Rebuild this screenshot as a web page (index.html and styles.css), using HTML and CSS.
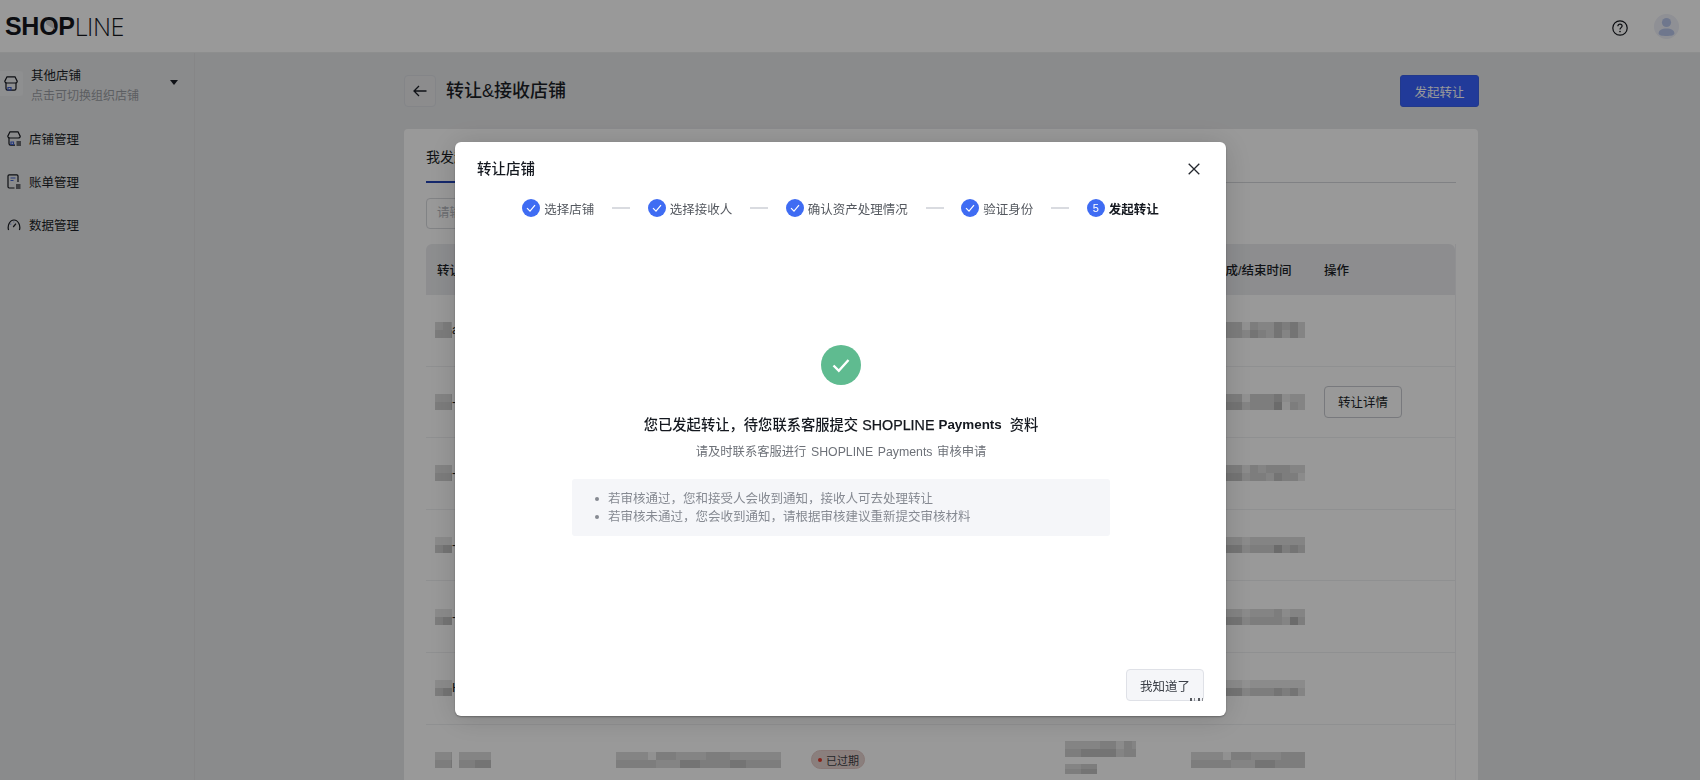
FILE: index.html
```html
<!DOCTYPE html>
<html lang="zh-CN">
<head>
<meta charset="utf-8">
<title>转让&amp;接收店铺</title>
<link rel="stylesheet" href="styles.css">
</head>
<body>
<div class="app">
  <header class="topbar">
    <div class="logo"><b>SH<span class="logo-o">O<svg class="logo-bird" viewBox="0 0 14 14"><path d="M3 3.5C5 1.5 8 1.5 9.5 3.5L12 11.5 6 8C4 7.5 2.5 5.5 3 3.5Z"/></svg></span>P</b><span class="logo-thin">LINE</span></div>
    <div class="top-actions">
      <svg class="help" viewBox="0 0 16 16"><circle cx="8" cy="8" r="7.2"/><path d="M5.9 6.2C5.9 5 6.8 4.2 8 4.2S10.1 5 10.1 6.1C10.1 7.6 8 7.7 8 9.4"/><circle class="dot" cx="8" cy="11.6" r=".8"/></svg>
      <div class="avatar"><svg viewBox="0 0 25 25"><circle cx="12.5" cy="8.5" r="4.6"/><path d="M4.6 19.5C4.6 16 8 14.4 12.5 14.4S20.4 16 20.4 19.5C20.4 21.2 17 22 12.5 22S4.6 21.2 4.6 19.5Z"/></svg></div>
    </div>
  </header>
  <div class="layout">
    <aside class="sidebar">
      <div class="store">
        <div class="store-icon">
          <svg class="ico" viewBox="0 0 14 15"><path d="M3 .8H11L13.2 5.2C13.2 6.6 11.8 7 11 7H3C2.2 7 .8 6.6 .8 5.2Z"/><path d="M2 7V12.6C2 13.6 2.6 14.2 3.6 14.2H10.4C11.4 14.2 12 13.6 12 12.6V7"/><path class="accent" d="M4 11.5H7V14H4Z"/></svg>
        </div>
        <div class="store-text"><div class="store-name">其他店铺</div><div class="store-sub">点击可切换组织店铺</div></div>
        <svg class="caret" viewBox="0 0 8 5"><path d="M0 0H8L4 5Z"/></svg>
      </div>
      <nav class="menu">
        <a class="menu-item"><svg class="ico" viewBox="0 0 14 15"><path d="M3 .8H11L13.2 5.2C13.2 6.6 11.8 7 11 7H3C2.2 7 .8 6.6 .8 5.2Z"/><path d="M2 7V12.6C2 13.6 2.6 14.2 3.6 14.2H8"/><path class="accent" d="M4 11H6.5V13.5H4Z"/><path class="fill" d="M9.5 10H14V15H9.5Z"/></svg>店铺管理</a>
        <a class="menu-item"><svg class="ico" viewBox="0 0 14 15"><path d="M7.5 14H2.2C1.4 14 1 13.6 1 12.8V2C1 1.2 1.4.8 2.2.8H9.8C10.6.8 11 1.2 11 2V8"/><path class="accent" d="M3.5 4H8.5M3.5 6.5H6.5"/><path class="fill" d="M9 10H13.5V15H9Z"/></svg>账单管理</a>
        <a class="menu-item"><svg class="ico" viewBox="0 0 14 15"><path d="M1.6 13C.2 9 2.6 3 7 3S13.8 9 12.4 13"/><path d="M6.2 10L9 6.6"/><path class="accent" d="M3.5 7.2H4.2M6.5 5H7.2"/></svg>数据管理</a>
      </nav>
    </aside>
    <main class="content">
      <div class="page-head">
        <button class="back"><svg viewBox="0 0 16 16"><path d="M14.5 8H2M7 3L2 8L7 13"/></svg></button>
        <h1 class="page-title">转让&amp;接收店铺</h1>
        <button class="primary">发起转让</button>
      </div>
      <section class="card">
        <div class="tabs"><div class="tab active">我发起的转让</div><div class="tab">我接收的转让</div></div>
        <div class="search">请输入店铺名称搜索</div>
        <div class="table">
          <div class="thead grid">
            <div class="first">转让店铺</div><div>接收人</div><div>状态</div><div>发起时间</div><div class="end">转让完成/结束时间</div><div>操作</div>
          </div>
          <div class="row grid"><div class="name"><i class="mz short p1"></i><span>a</span></div><div></div><div></div><div></div><div><i class="mz time p1"></i></div><div></div></div>
          <div class="row grid"><div class="name"><i class="mz short p2"></i><span>-</span></div><div></div><div></div><div></div><div><i class="mz time p2"></i></div><div><button class="outline">转让详情</button></div></div>
          <div class="row grid"><div class="name"><i class="mz short p3"></i><span>-</span></div><div></div><div></div><div></div><div><i class="mz time p3"></i></div><div></div></div>
          <div class="row grid"><div class="name"><i class="mz short p4"></i><span>-</span></div><div></div><div></div><div></div><div><i class="mz time p4"></i></div><div></div></div>
          <div class="row grid"><div class="name"><i class="mz short p4"></i><span>-</span></div><div></div><div></div><div></div><div><i class="mz time p5"></i></div><div></div></div>
          <div class="row grid"><div class="name"><i class="mz short p4"></i><span>H</span></div><div></div><div></div><div></div><div><i class="mz time p6"></i></div><div></div></div>
          <div class="row grid">
            <div class="name"><i class="mz short p2"></i><i class="mz mid p3"></i></div>
            <div><i class="mz wide p7"></i></div>
            <div><span class="badge"><em></em>已过期</span></div>
            <div class="stack"><i class="mz date p3"></i><i class="mz clock p2"></i></div>
            <div><i class="mz time p7"></i></div>
            <div></div>
          </div>
        </div>
      </section>
    </main>
  </div>
</div>

<div class="overlay"></div>

<div class="modal" role="dialog">
  <div class="modal-head">
    <div class="modal-title">转让店铺</div>
    <svg class="close" viewBox="0 0 12 12"><path d="M.7.7L11.3 11.3M11.3.7L.7 11.3"/></svg>
  </div>
  <div class="steps">
    <div class="step"><svg class="tick" viewBox="0 0 18 18"><circle cx="9" cy="9" r="9"/><path d="M5 9.2L8 12.2L13 6.2"/></svg>选择店铺</div>
    <i class="dash"></i>
    <div class="step"><svg class="tick" viewBox="0 0 18 18"><circle cx="9" cy="9" r="9"/><path d="M5 9.2L8 12.2L13 6.2"/></svg>选择接收人</div>
    <i class="dash"></i>
    <div class="step"><svg class="tick" viewBox="0 0 18 18"><circle cx="9" cy="9" r="9"/><path d="M5 9.2L8 12.2L13 6.2"/></svg>确认资产处理情况</div>
    <i class="dash"></i>
    <div class="step"><svg class="tick" viewBox="0 0 18 18"><circle cx="9" cy="9" r="9"/><path d="M5 9.2L8 12.2L13 6.2"/></svg>验证身份</div>
    <i class="dash"></i>
    <div class="step current"><span class="num">5</span>发起转让</div>
  </div>
  <div class="result">
    <svg class="ok" viewBox="0 0 40 40"><circle cx="20" cy="20" r="20"/><path d="M12.5 20.5L17.8 25.8L27.5 15"/></svg>
    <div class="result-title">您已发起转让，待您联系客服提交 <b>SHOPLINE</b> <b class="raised">Payments</b>  资料</div>
    <div class="result-sub">请及时联系客服进行 SHOPLINE Payments 审核申请</div>
    <ul class="tips">
      <li>若审核通过，您和接受人会收到通知，接收人可去处理转让</li>
      <li>若审核未通过，您会收到通知，请根据审核建议重新提交审核材料</li>
    </ul>
  </div>
  <div class="modal-foot"><button class="ack">我知道了</button></div>
</div>
</body>
</html>
```
FILE: styles.css
```css
* { box-sizing: border-box; }
html, body { margin: 0; height: 100%; overflow: hidden; }
body {
  font-family: "Liberation Sans", "Noto Sans CJK SC", sans-serif;
  color: #1b1f27;
  background: #e7e8ea;
  --a: #e8e8e8; --b: #dcdcdc; --c: #d0d0d0; --d: #c2c2c2; --e: #b2b2b2; --n: #f2f2f2;
}
button { font-family: inherit; cursor: pointer; }
.app { height: 780px; display: flex; flex-direction: column; overflow: hidden; }

/* top bar */
.topbar {
  height: 53px; flex: none; background: #fff; border-bottom: 1px solid #eceded;
  display: flex; align-items: center; justify-content: space-between;
  padding: 0 21px 0 5px;
}
.logo { font-size: 25px; line-height: 24px; display: flex; color: #14171d; letter-spacing: -.3px; }
.logo b { font-weight: 700; }
.logo-thin { font-family: "Open Sans", sans-serif; font-weight: 300; font-size: 25px; letter-spacing: -.4px; }
.logo-o { position: relative; }
.logo-bird { position: absolute; left: 3.5px; top: 5.5px; width: 14px; height: 14px; fill: #d0d0d0; }
.top-actions { display: flex; align-items: center; gap: 26px; }
.help { width: 16px; height: 16px; fill: none; stroke: #14171d; stroke-width: 1.2; margin-top: 3px; }
.help .dot { fill: #14171d; stroke: none; }
.avatar { width: 25px; height: 25px; border-radius: 50%; background: #eef0f8; }
.avatar svg { display: block; fill: #b9c7ec; }

/* shell */
.layout { flex: 1; display: flex; min-height: 0; }
.sidebar { width: 195px; flex: none; border-right: 1px solid #dfe0e2; padding-top: 18px; }
.store { display: flex; align-items: center; height: 25px; }
.store-icon { width: 23px; height: 25px; background: #edeef0; border-radius: 0 3px 3px 0; display: flex; align-items: center; padding-left: 4px; }
.store-text { margin-left: 8px; width: 131px; }
.store-name { font-size: 12.5px; line-height: 16px; margin-top: 4px; }
.store-sub { font-size: 12px; line-height: 16px; margin-top: 4px; color: #9a9da3; }
.caret { width: 8px; height: 5px; fill: #1b1f27; margin-left: 8px; margin-top: -3px; }
.ico { width: 14px; height: 15px; flex: none; fill: none; stroke: #15181e; stroke-width: 1.2; display: block; }
.ico .accent { stroke: #3e5fd0; }
.ico .fill { fill: #6a6c70; stroke: none; }
.menu { margin-top: 30px; display: flex; flex-direction: column; gap: 19px; padding-left: 7px; }
.menu-item { display: flex; align-items: center; gap: 8px; height: 24px; font-size: 12.5px; }

/* content */
.content { flex: 1; padding: 22px 0 0 209px; min-width: 0; }
.page-head { width: 1075px; height: 32px; display: flex; align-items: center; }
.back { width: 32px; height: 32px; border: 1px solid #dcdee3; border-radius: 4px; background: #e9eaec; padding: 7px; margin-right: 10px; }
.back svg { display: block; width: 16px; height: 16px; fill: none; stroke: #1b1f27; stroke-width: 1.3; }
.page-title { margin: 0; flex: 1; font-size: 18px; font-weight: 500; line-height: 32px; }
.primary { width: 79px; height: 32px; border: 1px solid #3a5fe8; border-radius: 3px; background: #3762ff; color: #fff; font-size: 12.5px; padding: 0; }
.card { width: 1074px; margin-top: 22px; background: #fff; border-radius: 4px 4px 0 0; padding: 0 22px; height: 700px; }
.tabs { height: 54px; display: flex; gap: 24px; border-bottom: 1px solid #d6d8dc; }
.tab { font-size: 14px; line-height: 56px; height: 54px; }
.tab.active { border-bottom: 2px solid #2444b4; }
.search { width: 360px; height: 31px; margin-top: 15px; border: 1px solid #d8dade; border-radius: 4px; font-size: 12.5px; line-height: 29px; padding-left: 10px; color: #b4b7bd; }
.table { margin-top: 15px; border-right: 1px solid #f0f1f3; }
.grid { display: grid; grid-template-columns: 181px 195px 254px 126px 133px 1fr; padding-left: 9px; }
.thead { height: 51px; background: #ebecef; border-radius: 6px 6px 0 0; align-items: center; font-size: 12.5px; font-weight: 500; }
.thead .first { padding-left: 2px; }
.thead .end { margin-left: -3px; white-space: nowrap; }
.row { height: 71.6px; border-bottom: 1px solid #eff0f2; align-items: center; font-size: 12.5px; }
.name { display: flex; align-items: center; gap: 0; overflow: hidden; }
.name span { font-weight: 500; }

/* mosaic: two rows of 8px cells */
.mz { display: block; height: 16px; background-repeat: no-repeat; background-size: 100% 8px; background-position: 0 0, 0 8px; flex: none; }
.short { width: 17px; margin-top: 0; }
.mid { width: 32px; margin-left: 7px; }
.wide { width: 165px; }
.date { width: 71px; }
.clock { width: 32px; height: 10px; margin-top: 7px; background-size: 100% 5px; background-position: 0 0, 0 5px; }
.time { width: 114px; }
.stack { margin-top: -5px; }
.p1 { background-image:
  linear-gradient(90deg, var(--b) 0 8px, var(--c) 8px 16px, var(--b) 16px 24px, var(--c) 24px 32px, var(--a) 32px 35px, var(--c) 35px 51px, var(--n) 51px 59px, var(--c) 59px 67px, var(--b) 67px 83px, var(--d) 83px 91px, var(--c) 91px 99px, var(--d) 99px 107px, var(--b) 107px 114px),
  linear-gradient(90deg, var(--c) 0 16px, var(--d) 16px 32px, var(--c) 32px 51px, var(--b) 51px 59px, var(--d) 59px 67px, var(--c) 67px 75px, var(--b) 75px 83px, var(--d) 83px 91px, var(--b) 91px 99px, var(--d) 99px 107px, var(--b) 107px 114px); }
.p2 { background-image:
  linear-gradient(90deg, var(--b) 0 16px, var(--c) 16px 32px, var(--c) 32px 51px, var(--n) 51px 59px, var(--c) 59px 83px, var(--d) 83px 91px, var(--a) 91px 99px, var(--b) 99px 114px),
  linear-gradient(90deg, var(--c) 0 16px, var(--d) 16px 51px, var(--b) 51px 59px, var(--c) 59px 83px, var(--e) 83px 91px, var(--n) 91px 99px, var(--c) 99px 107px, var(--b) 107px 114px); }
.p3 { background-image:
  linear-gradient(90deg, var(--b) 0 35px, var(--c) 35px 51px, var(--a) 51px 59px, var(--c) 59px 67px, var(--b) 67px 75px, var(--c) 75px 99px, var(--b) 99px 114px),
  linear-gradient(90deg, var(--c) 0 16px, var(--d) 16px 51px, var(--b) 51px 59px, var(--c) 59px 75px, var(--b) 75px 83px, var(--d) 83px 91px, var(--c) 91px 107px, var(--a) 107px 114px); }
.p4 { background-image:
  linear-gradient(90deg, var(--a) 0 35px, var(--b) 35px 51px, var(--a) 51px 59px, var(--b) 59px 114px),
  linear-gradient(90deg, var(--c) 0 8px, var(--d) 8px 16px, var(--d) 16px 51px, var(--b) 51px 59px, var(--c) 59px 83px, var(--e) 83px 91px, var(--c) 91px 99px, var(--d) 99px 107px, var(--c) 107px 114px); }
.p5 { background-image:
  linear-gradient(90deg, var(--a) 0 35px, var(--b) 35px 51px, var(--a) 51px 59px, var(--b) 59px 83px, var(--c) 83px 91px, var(--a) 91px 99px, var(--b) 99px 114px),
  linear-gradient(90deg, var(--d) 0 51px, var(--b) 51px 59px, var(--c) 59px 91px, var(--b) 91px 99px, var(--e) 99px 107px, var(--c) 107px 114px); }
.p6 { background-image:
  linear-gradient(90deg, var(--n) 0 35px, var(--a) 35px 51px, var(--n) 51px 59px, var(--a) 59px 114px),
  linear-gradient(90deg, var(--d) 0 51px, var(--b) 51px 59px, var(--c) 59px 83px, var(--d) 83px 91px, var(--c) 91px 99px, var(--d) 99px 107px, var(--b) 107px 114px); }
.p7 { background-image:
  linear-gradient(90deg, var(--b) 0 32px, var(--n) 32px 40px, var(--c) 40px 60px, var(--b) 60px 90px, var(--c) 90px 114px, var(--b) 114px 165px),
  linear-gradient(90deg, var(--c) 0 40px, var(--b) 40px 64px, var(--d) 64px 84px, var(--c) 84px 114px, var(--d) 114px 130px, var(--c) 130px 165px); }
.badge { display: inline-flex; align-items: center; height: 19px; padding: 0 5px 0 6px; border-radius: 10px; background: #e6d4d1; border: 1px solid #e3c9c5; font-size: 11px; font-style: normal; color: #3e4146; }
.badge em { width: 4px; height: 4px; border-radius: 50%; background: #e23c2c; margin-right: 4px; }
.outline { width: 78px; height: 32px; padding: 0; border: 1px solid #c8cad0; border-radius: 4px; background: #fff; font-size: 12.5px; color: #1b1f27; }

/* overlay + modal */
.overlay { position: fixed; inset: 0; background: rgba(0, 0, 0, .4); }
.modal {
  position: fixed; left: 455px; top: 142px; width: 771px; height: 574px;
  background: #fff; border-radius: 6px; box-shadow: 0 2px 30px rgba(0, 0, 0, .16), 0 1px 2px rgba(0, 0, 0, .3);
  display: flex; flex-direction: column;
}
.modal-head { height: 57px; padding: 0 26px 0 22px; display: flex; justify-content: space-between; align-items: flex-start; }
.modal-title { font-size: 14.5px; line-height: 20px; margin-top: 17px; font-weight: 500; color: #14181f; }
.close { width: 12px; height: 12px; margin-top: 21px; fill: none; stroke: #23262d; stroke-width: 1.3; }
.steps { display: flex; justify-content: center; align-items: center; height: 18px; font-size: 12.5px; color: #54585f; }
.step { display: flex; align-items: center; gap: 4px; white-space: nowrap; }
.tick { width: 18px; height: 18px; display: block; }
.tick circle { fill: #3f6cf3; }
.tick path { fill: none; stroke: #fff; stroke-width: 1.2; }
.dash { width: 18px; height: 2px; margin: 0 17.75px; background: #d9dbe0; }
.current { color: #14181f; font-weight: 700; }
.num { width: 18px; height: 18px; border-radius: 50%; background: #3f6cf3; color: #fff; font-size: 11px; font-weight: 400; text-align: center; line-height: 18px; }
.result { display: flex; flex-direction: column; align-items: center; padding-top: 128px; padding-left: 1px; }
.ok { width: 40px; height: 40px; display: block; }
.ok circle { fill: #5fbb90; }
.ok path { fill: none; stroke: #fff; stroke-width: 2.4; }
.result-title { margin-top: 30px; font-size: 14.3px; line-height: 20px; font-weight: 500; color: #14181f; white-space: pre-wrap; }
.result-title b { font-weight: 500; -webkit-text-stroke: .25px #14181f; }
.raised { position: relative; top: -1px; font-weight: 700 !important; font-size: 13.4px; -webkit-text-stroke: 0 !important; }
.result-sub { margin-top: 7px; font-size: 12.3px; line-height: 18px; color: #6d7178; word-spacing: 1.2px; }
.tips { width: 538px; height: 57px; margin: 18px 0 0; padding: 11px 0 0 36px; background: #f5f6f9; border-radius: 3px; font-size: 12.5px; line-height: 18px; color: #868a92; list-style: none; }
.tips li { position: relative; }
.tips li::before { content: ""; position: absolute; left: -13px; top: 7px; width: 4px; height: 4px; border-radius: 50%; background: #868a92; }
.modal-foot { margin-top: auto; padding: 0 22px 15px 0; display: flex; justify-content: flex-end; }
.ack { position: relative; width: 78px; height: 32px; padding: 0; background: #f5f6f9; border: 1px solid #dfe1e7; border-radius: 4px; font-size: 12.5px; color: #3c4048; }
.ack::after { content: ""; position: absolute; right: -2px; bottom: -1px; width: 15px; height: 3px; background: repeating-linear-gradient(90deg, #55585e 0 2px, transparent 2px 4px, #8a8c90 4px 5px, transparent 5px 8px); }
```
